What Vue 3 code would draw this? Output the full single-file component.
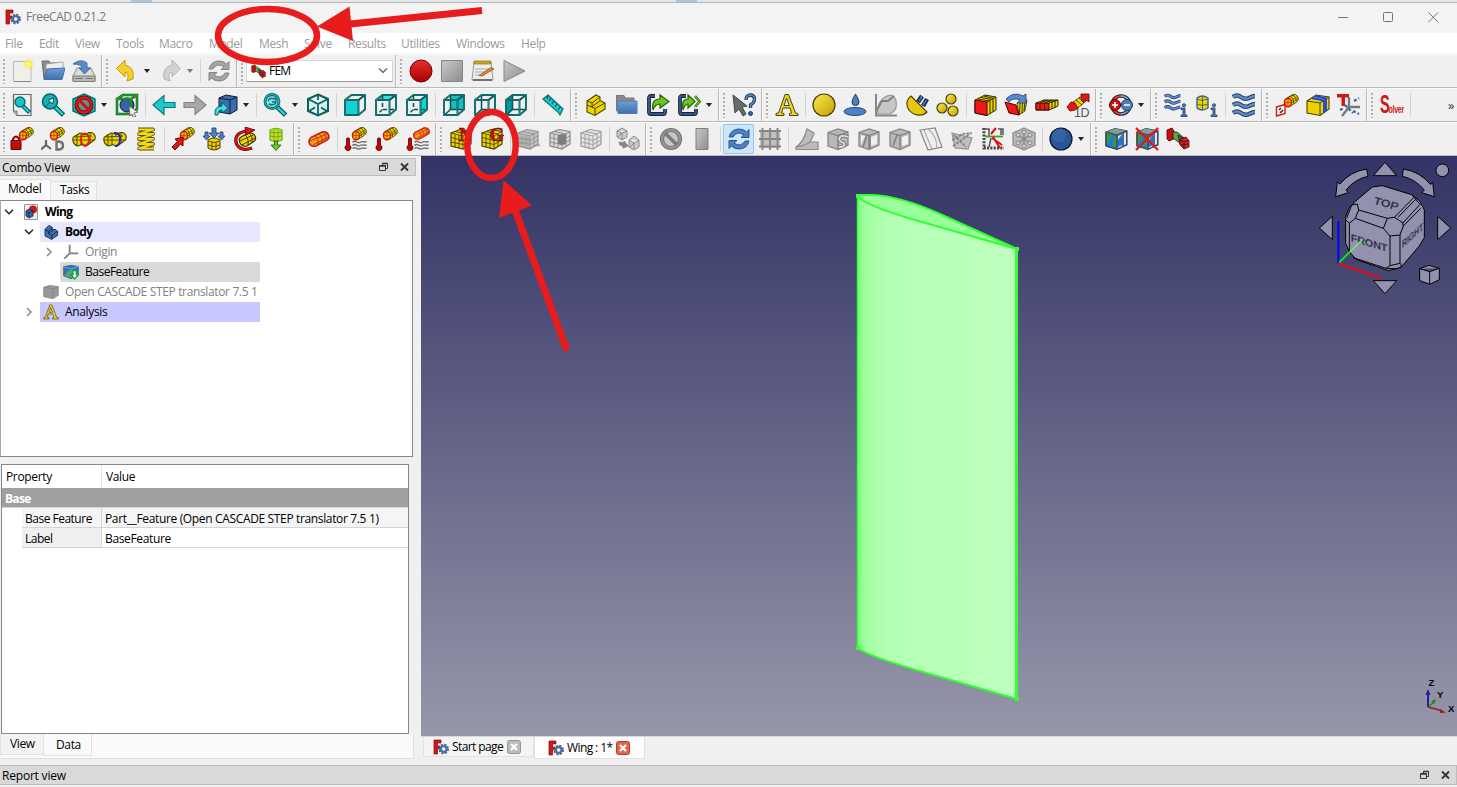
<script setup>
const menus = [
  ['File', 34], ['Edit', 36], ['View', 41], ['Tools', 43], ['Macro', 50], ['Model', 50],
  ['Mesh', 45], ['Solve', 44], ['Results', 53], ['Utilities', 55], ['Windows', 65], ['Help', 40],
]

// '|' is a separator, a trailing '+' or '~' adds an active or dimmed drop-down arrow
const parse = (s) => s.split(' ').map((t) => ({
  sep: t === '|',
  combo: t === 'combo',
  menu: t.endsWith('+') || t.endsWith('~'),
  dim: t.endsWith('~'),
  on: t === 'refresh',
  id: t.replace(/[+~]$/, ''),
}))
const rows = [
  ['new open save', 'undo+ redo~ | reload', 'combo', 'record stop macros play'],
  [
    'fitall fitsel drawstyle+ boxsel | back fwd linknav+ | zoomt+ iso | v-front v-top v-right | v-rear v-bottom v-left | ruler',
    'part folder link links+', 'whats',
    'analysis | solid fluid nonlin reinforced balls | beam shell beam3 fluid1d',
    'charge+', 'flowi cyli | flow', 'plane section axes', 'solver |',
  ],
  [
    'lock rigid contact tie spring | force pressure centrif gravity',
    'tinit | heatflux temp bodyheat', 'netgen gmsh | region group boundary | convert',
    'nope purge | refresh grid | warp sclip scut clip contour linec stress nodes | ball+',
    'pipe unpipe femwb',
  ],
].map((r) => r.map(parse))

const V = { A: '2,7', B: '15.5,7', C: '15.5,22', D: '2,22', a: '8.5,2', b: '22,2', c: '22,16.5', d: '8.5,16.5' }
const pts = (k) => k.split('').map((c) => V[c]).join(' ')
const views = [
  { n: 'front', f: 'ABCD', c: '#16d0d2' }, { n: 'top', f: 'ABba', c: '#34e0e2' }, { n: 'right', f: 'BCcb', c: '#16d0d2' },
  { n: 'rear', f: 'abcd', c: '#16c0c2' }, { n: 'bottom', f: 'DCcd', c: '#34e0e2' }, { n: 'left', f: 'ADda', c: '#06989a' },
]
const tree = [
  { t: 'Wing', x: 0, ex: 'open', ic: 't-doc', cls: 'bold', bg: '' },
  { t: 'Body', x: 20, ex: 'open', ic: 't-body', cls: 'bold', bg: 'lav' },
  { t: 'Origin', x: 40, ex: 'closed', ic: 't-origin', cls: 'off', bg: '' },
  { t: 'BaseFeature', x: 40, ex: '', ic: 't-base', cls: 'tight', bg: 'sel' },
  { t: 'Open CASCADE STEP translator 7.5 1', x: 20, ex: '', ic: 't-cube', cls: 'off', bg: '' },
  { t: 'Analysis', x: 20, ex: 'closed', ic: 'analysis', cls: '', bg: 'vio' },
]
</script>

<template>
  <div class="win">
    <svg class="defs" width="0" height="0">
      <defs>
        <linearGradient id="gy" x1="0" y1="0" x2="1" y2="1"><stop offset="0" stop-color="#fce94f" /><stop offset="1" stop-color="#c4a000" /></linearGradient>
        <linearGradient id="gb" x1="0" y1="0" x2="0" y2="1"><stop offset="0" stop-color="#729fcf" /><stop offset="1" stop-color="#3f70b0" /></linearGradient>
        <linearGradient id="gg" x1="0" y1="0" x2="1" y2="1"><stop offset="0" stop-color="#c8c8c8" /><stop offset="1" stop-color="#8e8e8e" /></linearGradient>
        <linearGradient id="gr" x1="0" y1="0" x2="0" y2="1"><stop offset="0" stop-color="#e83030" /><stop offset="1" stop-color="#a80000" /></linearGradient>

        <symbol id="bar" viewBox="0 0 24 24">
          <path d="M4 8 13 2.500Q18 .5 21 5T19 13L10 19Q5 20 3 15.500T4 8Z" fill="#edd400" stroke="#4a4200" stroke-width="1.200" />
          <path d="M10 5Q15 7 15 15M14 3Q19 5 19 12M7 6.500 17 2M12 14 21 8M13 10 20 5" fill="none" stroke="#4a4200" stroke-width="1.100" />
          <ellipse cx="7" cy="13.500" rx="5" ry="6" fill="#edb800" stroke="#d81010" stroke-width="2" />
          <path d="M3 13.500H11M7 8V19" stroke="#b03000" stroke-width="1" />
        </symbol>
        <symbol id="waves" viewBox="0 0 24 24" preserveAspectRatio="none">
          <g fill="none" stroke="#6f6f6f" stroke-width="3"><path d="M1 5Q4 1 7 4T13 5T19 4T23 3" /><path d="M1 12Q4 8 7 11T13 12T19 11T23 10" /><path d="M1 19Q4 15 7 18T13 19T19 18T23 17" /></g>
        </symbol>
        <symbol id="thermo" viewBox="0 0 8 14"><path d="M2.500 1.500Q4 0 5.500 1.500V8A3 3 0 1 1 2.500 8Z" fill="#cc0000" stroke="#500" stroke-width=".8" /></symbol>
        <symbol id="mcube" viewBox="0 0 24 24">
          <path d="M2 6 11 2.500 22 4.500V17L14 22 2 19Z" stroke-width="1.200" />
          <path d="M2 6 14 9V22M14 9 22 4.500M6 7.500V20M10 8.300V21M18 7V19.500M2 10.500 14 13.500 22 9M2 15 14 17.500 22 13M6 4.500 18 7" fill="none" stroke-width=".9" />
        </symbol>
        <symbol id="gcube" viewBox="0 0 24 24">
          <path d="M2 5.500 12 2 22 5V18L12 22.500 2 19Z" fill="#b8b8b8" stroke="#858585" stroke-width="1.300" />
          <path d="M2 5.500 12 8.500 22 5M12 8.500V22" fill="none" stroke="#808080" stroke-width="1.300" />
        </symbol>

        <symbol id="new" viewBox="0 0 24 24"><path d="M3.500 2.500H21V22.500H3.500Z" fill="#efefec" stroke="#b8b8b2" /><path d="M4 22.500H21" stroke="#888" /><circle cx="18.500" cy="5" r="5" fill="#f8ee40" opacity=".55" /><circle cx="18.500" cy="5" r="2.800" fill="#fdf75c" /></symbol>
        <symbol id="open" viewBox="0 0 24 24"><path d="M1 2H8L9 4H21V20H3Z" fill="#8b8f8c" stroke="#6a6d6a" /><path d="M5 5 22 3 22 12H5Z" fill="#eee" stroke="#999" stroke-width=".8" /><path d="M6 10 24 9 21 20.500H3Z" fill="url(#gb)" stroke="#3f70b0" /></symbol>
        <symbol id="save" viewBox="0 0 24 24"><path d="M5 9H19L23 17V22H1V17Z" fill="#dcdddA" stroke="#8a8c88" /><path d="M1 17H23V22.500H1Z" fill="#b8bab6" stroke="#7a7c78" /><path d="M3 19.500H11M14 19.500H21" stroke="#777" /><path d="M1 5Q9-1 15 4V9H18.500L12.500 15 7 9H10.500Q9 5 1 5Z" fill="#5c8ac4" stroke="#3465a4" stroke-width=".9" /></symbol>
        <symbol id="undo" viewBox="0 0 24 24"><path d="M10 1V6Q20 8 18 20L12 22Q15 14 10 13V18L1.500 9.500Z" fill="#f0d030" stroke="#c4a000" /></symbol>
        <symbol id="redo" viewBox="0 0 24 24"><path d="M14 1V6Q4 8 6 20L12 22Q9 14 14 13V18L22.500 9.500Z" fill="#d2d2d2" stroke="#b5b5b5" /></symbol>
        <symbol id="sync" viewBox="0 0 24 24"><path d="M2 10Q4 2 12 2 17 2 19.500 5L22 2.500V10.500H14L17 7.800Q10 3.500 6 10ZM22 14Q20 22 12 22 7 22 4.500 19L2 21.500V13.500H10L7 16.200Q14 20.500 18 14Z" stroke-width="1" /></symbol>
        <symbol id="reload" viewBox="0 0 24 24"><use href="#sync" fill="#a4a4a4" stroke="#858585" /></symbol>
        <symbol id="refresh" viewBox="0 0 24 24"><use href="#sync" fill="#4f80bd" stroke="#2a5595" /></symbol>
        <symbol id="record" viewBox="0 0 24 24"><circle cx="12" cy="12" r="11" fill="url(#gr)" stroke="#700" /></symbol>
        <symbol id="stop" viewBox="0 0 24 24"><path d="M1.500 1.500H22.500V22.500H1.500Z" fill="url(#gg)" stroke="#858585" /></symbol>
        <symbol id="macros" viewBox="0 0 24 24"><path d="M3 3H20L22 21H1Z" fill="#eeeeec" stroke="#999" /><path d="M3 2H20V5H3Z" fill="#c4a820" stroke="#8a7a20" stroke-width=".7" /><path d="M4 10H18M4 13H16M4 16H12" stroke="#aaa" /><path d="M2 21H21" stroke="#555" stroke-width="1.500" /><path d="M8 16.500 20 8.500 23 10 11 17Z" fill="#e08a30" stroke="#8a5518" stroke-width=".8" /></symbol>
        <symbol id="play" viewBox="0 0 24 24"><path d="M2 1.500 23 12 2 22.500Z" fill="url(#gg)" stroke="#858585" /></symbol>

        <symbol id="fitall" viewBox="0 0 24 24"><path d="M3.500 1.500H21V22.500H7L3.500 18Z" fill="#eee" stroke="#666" stroke-width="1.200" /><path d="M3.500 18H7V22.500" fill="#bbb" stroke="#777" /><path d="M13 13 19.500 19.500" stroke="#055" stroke-width="4" /><path d="M13 13 19 19" stroke="#16d0d2" stroke-width="2.200" /><circle cx="10" cy="9" r="5" fill="#16c4c6" stroke="#0a6e70" stroke-width="1.400" /></symbol>
        <symbol id="fitsel" viewBox="0 0 24 24"><path d="M13 13 22.500 22" stroke="#044" stroke-width="4.600" /><path d="M14 14 22 21.500" stroke="#16d0d2" stroke-width="2.600" /><circle cx="9" cy="8.500" r="7.500" fill="#18b0b2" stroke="#066" stroke-width="1.500" /><path d="M4.500 13.500 9.500 9 7.500 7 13 5 11.500 11 9.500 9" fill="#fff" stroke="#033" stroke-width=".8" /></symbol>
        <symbol id="drawstyle" viewBox="0 0 24 24"><path d="M12 1 23 6V18L12 23 1 18V6Z" fill="#16b8ba" stroke="#077072" stroke-width="1.400" /><circle cx="12" cy="12" r="7.500" fill="#6a8c8c" stroke="#600" stroke-width="3.800" /><circle cx="12" cy="12" r="7.500" fill="none" stroke="#e01818" stroke-width="2.300" /><path d="M7 7 17 17" stroke="#d01010" stroke-width="2.800" /></symbol>
        <symbol id="boxsel" viewBox="0 0 24 24"><circle cx="12" cy="12" r="7" fill="#3465a4" stroke="#0b1521" /><path d="M2 6H16V21H2ZM2 6 8 2H22V16L16 21M16 6 22 2" fill="none" stroke="#0a5a14" stroke-width="2.500" /><path d="M2 6H16V21H2ZM2 6 8 2H22V16L16 21M16 6 22 2" fill="none" stroke="#30c040" stroke-width="1" /><path d="M14 13 23 19 19 20 21 24 18 24 17 21 15 23Z" fill="#eee" stroke="#555" stroke-width=".8" /></symbol>
        <symbol id="back" viewBox="0 0 24 24"><path d="M1 12 12 2.500V9.500H23V14.500H12V21.500Z" fill="#20c8ca" stroke="#0a7a7c" stroke-width="1.200" /></symbol>
        <symbol id="fwd" viewBox="0 0 24 24"><path d="M23 12 12 2.500V9.500H1V14.500H12V21.500Z" fill="#a8a8a8" stroke="#858585" stroke-width="1.200" /></symbol>
        <symbol id="linknav" viewBox="0 0 24 24"><path d="M5 5 12 2 23 4V17L16 21 5 19Z" fill="#3a6cae" stroke="#0b1e38" stroke-width="1" /><path d="M5 5 16 7 23 4M16 7V21" fill="none" stroke="#0b1e38" /><path d="M1 22Q0 13 8 13V9.500L14 15 8 20V17Q4 17 4 22Z" fill="#34e0e2" stroke="#055" stroke-width=".9" /></symbol>
        <symbol id="zoomt" viewBox="0 0 24 24"><path d="M13 13 22.500 22" stroke="#044" stroke-width="4.600" /><path d="M14 14 22 21.500" stroke="#16d0d2" stroke-width="2.600" /><circle cx="9" cy="8.500" r="7" fill="#8fdcdd" stroke="#066" stroke-width="2.800" /><circle cx="9" cy="8.500" r="7" fill="none" stroke="#20b8ba" stroke-width="1.200" /><path d="M5 8Q7 4 11 6L13 5V9H9M13 10Q10 13 6 11" fill="none" stroke="#0a7678" stroke-width="1.400" /></symbol>
        <symbol id="iso" viewBox="0 0 24 24"><path d="M12 1.500 22 6V18L12 22.500 2 18V6Z" fill="#dcf2f2" stroke="#0a5f60" stroke-width="2" /><path d="M2 6 12 11 22 6M12 11V22M12 2V7M3 18 9 14.500M21 18 15 14.500" fill="none" stroke="#0a5f60" stroke-width="1.700" /></symbol>
        <symbol v-for="v in views" :key="v.n" :id="'v-' + v.n" viewBox="0 0 24 24">
          <polygon :points="pts(v.f)" :fill="v.c" />
          <g fill="none" stroke="#075354" stroke-width="1.900" stroke-linejoin="round">
            <polygon :points="pts('ABCD')" /><polyline :points="pts('AabB')" /><polyline :points="pts('bcC')" />
            <path v-if="v.n !== 'front'" d="M8.500 3V16.500H21M8.500 16.500 3 21.500" stroke-width="1.500" :stroke-dasharray="v.n === 'top' || v.n === 'right' ? '4 3' : 'none'" />
          </g>
          <g fill="none" stroke="#22a8aa" stroke-width=".6"><polygon :points="pts('ABCD')" /><polyline :points="pts('AabcC')" /></g>
        </symbol>
        <symbol id="ruler" viewBox="0 0 24 24"><path d="M2 6 7 2 22 16 19 22 18 20Z" fill="#20c8ca" stroke="#077072" stroke-width="1.200" /><path d="M7 2 6 6M10 5 8 8M13 8 11 11M16 11 14 14M19 14 17 17" stroke="#055" stroke-width="1.100" /></symbol>

        <symbol id="part" viewBox="0 0 24 24"><path d="M3 12V19L11 22.500 21 16V10L16 7.500V4L12 2 3 8Z" fill="#edd400" stroke="#4a4200" stroke-width="1.100" /><path d="M3 12 11 15.500V22M11 15.500 21 10M3 8 8 10V14M8 10 16 4M8 13.500 16 8" fill="none" stroke="#4a4200" stroke-width="1" /></symbol>
        <symbol id="folder" viewBox="0 0 24 24"><path d="M1.500 2.500H9L10 5H19V18H1.500Z" fill="#888b88" stroke="#777" /><path d="M3 8H22V20.500H3Z" fill="url(#gb)" stroke="#4f7cb8" /></symbol>
        <symbol id="lk" viewBox="0 0 24 24"><path d="M9 3H5Q3 3 3 5V19Q3 21 5 21H17Q19 21 19 19V16" fill="none" stroke="#16263c" stroke-width="3.800" /><path d="M9 3H5Q3 3 3 5V19Q3 21 5 21H17Q19 21 19 19V16" fill="none" stroke="#3f6496" stroke-width="1.600" /></symbol>
        <symbol id="link" viewBox="0 0 24 24"><use href="#lk" /><path d="M7 17Q5 6 14 6V2L23 8.500 14 15V11Q9 11 7 17Z" fill="#6cc81e" stroke="#2a5e0a" stroke-width="1.200" /></symbol>
        <symbol id="links" viewBox="0 0 24 24"><use href="#lk" /><path d="M6 17Q4 6 11 6V2L18 8.500 11 15V11Q8 11 6 17Z" fill="#6cc81e" stroke="#2a5e0a" stroke-width="1.200" /><path d="M18 3 22.500 8.500 18 14" fill="none" stroke="#2f6a0a" stroke-width="2.600" /><path d="M18 3 22.500 8.500 18 14" fill="none" stroke="#8ae234" stroke-width="1" /></symbol>
        <symbol id="whats" viewBox="0 0 24 24"><path d="M1 2 15 13 10 14 14 21 11 23 7 16 3 20Z" fill="#666b68" stroke="#444" stroke-width="1" /><path d="M14 7Q14 2 19 2 23 3 22.500 7 22 10 18.500 12V15" fill="none" stroke="#173a68" stroke-width="3.400" /><path d="M14 7Q14 2 19 2 23 3 22.500 7 22 10 18.500 12V15" fill="none" stroke="#5b87c0" stroke-width="1.500" /><circle cx="18.500" cy="20.500" r="2" fill="#3465a4" stroke="#173a68" /></symbol>

        <symbol id="analysis" viewBox="0 0 24 24"><path d="M1 22.500V20.500L3.500 20 10 1.500H13.500L20.500 20 23 20.500V22.500H14.500V20.500L16.500 20 15 15H8L6.500 20 9 20.500V22.500ZM9 12.500H14.300L11.500 5Z" fill="#edd426" stroke="#4a4414" stroke-width="1" /></symbol>
        <symbol id="solid" viewBox="0 0 24 24"><circle cx="12" cy="12" r="11" fill="url(#gy)" stroke="#4a4200" stroke-width="1.200" /></symbol>
        <symbol id="fluid" viewBox="0 0 24 24"><ellipse cx="12" cy="18.500" rx="11" ry="4" fill="#4f80c0" stroke="#204a87" /><path d="M12.500 1Q9 7 9 9A3.500 3.500 0 0 0 16 9Q16 7 12.500 1Z" fill="#4f80c0" stroke="#173a68" /></symbol>
        <symbol id="nonlin" viewBox="0 0 24 24"><path d="M2 1V22.500H23" stroke="#888" stroke-width="2" fill="none" /><path d="M4 21Q2 10 11 4 20-1 22 8 24 18 15 21Z" fill="#c6c6c6" stroke="#999" stroke-width="1.200" /><path d="M3 17 8 8H14L20 3" fill="none" stroke="#808080" stroke-width="1.800" /></symbol>
        <symbol id="reinforced" viewBox="0 0 24 24"><path d="M6 3 22 19Q17 24 9 21 1 17 2 9 3 5 6 3Z" fill="#e6c810" stroke="#4a4200" stroke-width="1.100" /><path d="M13 9 17 3M18 13 22 6" stroke="#122a50" stroke-width="4.500" /><path d="M14 8 17 3M18 12 21.500 7" stroke="#5580b0" stroke-width="1.500" /></symbol>
        <symbol id="balls" viewBox="0 0 24 24"><g fill="url(#gy)" stroke="#4a4200" stroke-width="1.200"><circle cx="15" cy="6" r="5" /><circle cx="6" cy="15" r="5" /><circle cx="17" cy="18" r="5" /></g></symbol>
        <symbol id="beam" viewBox="0 0 24 24"><path d="M2 7 12 2 23 4V17L14 22.500 2 20Z" fill="#edd400" stroke="#302b00" stroke-width="1" /><path d="M2 7 14 9V22.500L2 20Z" fill="#f01818" stroke="#400" stroke-width="1" /><path d="M14 9 23 4M17 7.500V20.500M20 6V18.500M5 6 16 8M8 4.500 19 6.500M11 3 21 5.500" fill="none" stroke="#302b00" stroke-width="1" /></symbol>
        <symbol id="shell" viewBox="0 0 24 24"><path d="M13 10 23 7 21 18 15 22Z" fill="#edd400" stroke="#302b00" stroke-width=".8" /><path d="M16 9 15.500 21M18.500 8.500 18 20M21 8 20 18" stroke="#302b00" stroke-width=".9" /><path d="M1 9 12 12 15 22 5 20Z" fill="#f01818" stroke="#400" stroke-width="1" /><path d="M2 6Q10-2 19 3L22 1V10H13L16 7Q9 4 5 9Z" fill="#5a8ac6" stroke="#204a87" stroke-width=".9" /></symbol>
        <symbol id="beam3" viewBox="0 0 24 24"><path d="M1 10 9 7H23V13L14 17H1Z" fill="#edd400" stroke="#302b00" stroke-width="1" /><path d="M1 10H14V17H1Z" fill="#f01818" stroke="#400" stroke-width="1" /><path d="M5 10V17M9.500 10V17M14 10 23 7M17 9V16M20 8V15M7 8H21M5 10 12 7M10 10 17 7" fill="none" stroke="#302b00" stroke-width="1" /></symbol>
        <symbol id="fluid1d" viewBox="0 0 24 24"><path d="M6 10 14 4 20 8 12 15Z" fill="#edd400" stroke="#302b00" stroke-width=".8" /><path d="M10 7 16 12M13 5 18 10" stroke="#302b00" stroke-width=".8" /><path d="M15 1H23V9L20 7 17 9 15 5ZM1 14 5 9 9 10 12 15 9 17 4 18Z" fill="#e01818" stroke="#600" stroke-width=".8" /><text x="8" y="23.500" font-family="Liberation Sans" font-size="12.500" fill="#555">1D</text></symbol>

        <symbol id="charge" viewBox="0 0 24 24"><circle cx="12" cy="12" r="9" fill="none" stroke="#301820" stroke-width="3.600" /><path d="M12 3A9 9 0 0 0 12 21" fill="none" stroke="#d84040" stroke-width="1.800" /><path d="M12 3A9 9 0 0 1 12 21" fill="none" stroke="#729fcf" stroke-width="1.800" /><circle cx="6" cy="12" r="5.500" fill="#d01010" stroke="#500" /><circle cx="18" cy="12" r="5.500" fill="#4f80bd" stroke="#173a68" /><path d="M3 12H9M6 9V15M15 12H21" stroke="#fff" stroke-width="1.600" /></symbol>
        <symbol id="flow" viewBox="0 0 24 24"><path d="M1 4Q5 1 9 4T17 5T23 3M1 12Q5 9 9 12T17 13T23 11M1 20Q5 17 9 20T17 21T23 19" fill="none" stroke="#1c3a68" stroke-width="4.400" /><path d="M1 4Q5 1 9 4T17 5T23 3M1 12Q5 9 9 12T17 13T23 11M1 20Q5 17 9 20T17 21T23 19" fill="none" stroke="#5f8cc4" stroke-width="2.500" /></symbol>
        <symbol id="ii" viewBox="0 0 8 14"><path d="M1 5H5V12H7V13.500H1V12H3V6.500H1Z" fill="#4f80bd" stroke="#1c3a68" stroke-width=".8" /><circle cx="4" cy="2.300" r="1.600" fill="#4f80bd" stroke="#1c3a68" stroke-width=".8" /></symbol>
        <symbol id="flowi" viewBox="0 0 24 24"><use href="#flow" x="0" y="0" width="17" height="18" /><use href="#ii" x="16" y="10" width="8" height="14" /></symbol>
        <symbol id="cyli" viewBox="0 0 24 24"><path d="M2 5V15Q7 19 13 15V5Q7 1 2 5Z" fill="#edd400" stroke="#3465a4" stroke-width="1.400" /><path d="M2 6Q7 9 13 6M2 11Q7 14 13 11M7.500 4V17" fill="none" stroke="#4a5a50" stroke-width=".9" /><use href="#ii" x="15" y="10" width="8" height="14" /></symbol>
        <symbol id="plane" viewBox="0 0 24 24"><use href="#bar" x="8" y="0" width="17" height="17" /><path d="M1.500 14 10 11.500V20.500L1.500 23Z" fill="#fff" stroke="#e01010" stroke-width="1.400" /><path d="M4 17 6 15M5 20 8 17" fill="none" stroke="#333" stroke-width="1.600" /></symbol>
        <symbol id="section" viewBox="0 0 24 24"><path d="M1 8 10 2 23 4V16L14 22.500 1 20Z" fill="#edd400" stroke="#4a4200" stroke-width="1.100" /><path d="M1 8 14 10V22M14 10 23 4" fill="none" stroke="#4a4200" stroke-width="1" /><path d="M6 5 18 7.500V19.500M9 3 20 5.500V18" fill="none" stroke="#1040f0" stroke-width="1.800" /></symbol>
        <symbol id="axes" viewBox="0 0 24 24"><path d="M12 14V4M12 14H23M12 14 5 23" stroke="#777" stroke-width="2.300" /><path d="M3 17 7 15M17 8 22 5M16 18 22 21M8 12 16 20" stroke="#3465a4" stroke-width="2.300" stroke-dasharray="3 2" /><path d="M0 1H12V4.500H8V13H4.500V4.500H0Z" fill="#d01818" /></symbol>
        <symbol id="solver" viewBox="0 0 24 24"><text x="0" y="20" font-family="Liberation Sans" font-weight="bold" font-size="25" fill="#d01818" textLength="9.500" lengthAdjust="spacingAndGlyphs">S</text><text x="8.500" y="20" font-family="Liberation Sans" font-weight="bold" font-size="10.500" fill="#d01818" textLength="15.500" lengthAdjust="spacingAndGlyphs">olver</text></symbol>

        <symbol id="lock" viewBox="0 0 24 24"><use href="#bar" x="8" y="-1" width="17" height="17" /><path d="M3 14V12Q6 7 9 12V14" fill="none" stroke="#800" stroke-width="2" /><path d="M1 13.500H11V22.500H1Z" fill="#d01010" stroke="#600" /><path d="M2 17H10M2 20H10" stroke="#900" stroke-width=".8" /></symbol>
        <symbol id="rigid" viewBox="0 0 24 24"><use href="#bar" x="8" y="-1" width="17" height="17" /><path d="M5 13V18L0 22.500M5 18 10 22" fill="none" stroke="#666" stroke-width="2.200" /><path d="M15.500 14.500H18Q22 15 22 18.500T18 22.500H15.500Z" fill="none" stroke="#707070" stroke-width="2.400" /></symbol>
        <symbol id="contact" viewBox="0 0 24 24"><path d="M3 9 8 6Q12 6 13 8L17 5.500Q22 5 23 9T21 14L15 18.500Q12 20 10 17.500L6 19Q2 18 1 14T3 9Z" fill="#edd400" stroke="#4a4200" stroke-width="1.100" /><path d="M5 8V19M9 7V18M18 6V16M1 13H23M3 10 20 9" stroke="#4a4200" stroke-width=".9" fill="none" /><ellipse cx="13" cy="12.500" rx="4" ry="6" fill="none" stroke="#e02010" stroke-width="1.800" /></symbol>
        <symbol id="tie" viewBox="0 0 24 24"><path d="M3 9 8 6Q12 6 13 8L17 5.500Q22 5 23 9T21 14L15 18.500Q12 20 10 17.500L6 19Q2 18 1 14T3 9Z" fill="#edd400" stroke="#4a4200" stroke-width="1.100" /><path d="M5 8V19M9 7V18M18 6V16M1 13H23M3 10 20 9" stroke="#4a4200" stroke-width=".9" fill="none" /><path d="M11 6Q17 5 17 12T12 19" fill="none" stroke="#2020c8" stroke-width="1.800" /></symbol>
        <symbol id="spring" viewBox="0 0 24 24"><path d="M4 2.500H19L5 7H19L5 12H19L5 17H19L5 21.500H20" fill="none" stroke="#5a5000" stroke-width="3.800" stroke-linejoin="round" /><path d="M4 2.500H19L5 7H19L5 12H19L5 17H19L5 21.500H20" fill="none" stroke="#f0d820" stroke-width="2.200" stroke-linejoin="round" /></symbol>
        <symbol id="force" viewBox="0 0 24 24"><use href="#bar" x="8" y="-1" width="17" height="17" /><path d="M12 10V19L9.500 17 4 23 1 20 6.500 14.500 4 12Z" fill="#e01818" stroke="#600" stroke-width="1" /></symbol>
        <symbol id="pressure" viewBox="0 0 24 24"><path d="M10 1H14V6H17L12 11 7 6H10ZM3 5H6V9H8L4.500 13 1 9H3ZM18 5H21V9H23L19.500 13 16 9H18Z" fill="#4f80bd" stroke="#1c3a68" stroke-width=".8" /><path d="M6 13Q12 9 18 13V21Q12 25 6 21Z" fill="#edd400" stroke="#4a4200" /><path d="M6 14Q12 17 18 14M6 18Q12 21 18 18M10 15V23M14 15V23" fill="none" stroke="#4a4200" stroke-width=".9" /></symbol>
        <symbol id="centrif" viewBox="0 0 24 24"><path d="M8 10 15 6Q20 5 22 9T20 15L14 19Q9 20 7 16T8 10Z" fill="#edd400" stroke="#302b00" stroke-width="1.100" /><path d="M12 8Q16 11 15 18M16 6Q20 9 19 15M7 14 20 8M9 18 22 11" fill="none" stroke="#302b00" stroke-width=".9" /><path d="M19 21Q8 25 3.500 17 0 6 14 4" fill="none" stroke="#400" stroke-width="3.200" /><path d="M19 21Q8 25 3.500 17 0 6 14 4" fill="none" stroke="#e01010" stroke-width="2" /><path d="M12 0 22 3 13 8Z" fill="#e01010" stroke="#500" stroke-width=".8" /></symbol>
        <symbol id="gravity" viewBox="0 0 24 24"><path d="M6 3Q12 0 18 3V13Q12 16 6 13Z" fill="#c8e020" stroke="#6cb818" stroke-width="1.300" /><path d="M6 5Q12 7 18 5M6 9Q12 11 18 9M10 3V14M14 3V14" fill="none" stroke="#6aa018" stroke-width=".9" /><path d="M10.500 14H13.500V18H17L12 23.500 7 18H10.500Z" fill="#6cc81e" stroke="#2a5e0a" stroke-width=".9" /></symbol>
        <symbol id="tinit" viewBox="0 0 24 24"><path d="M4 10.500 15 5Q20 4 21.500 8T19 13.500L9 19Q4 20 2.500 16.500T4 10.500Z" fill="#f0a020" stroke="#d01818" stroke-width="1.600" /><path d="M8 9Q12 11 11 18M12 7Q16 9 15 15.500M16 5Q20 8 19 13M3 14 20 7M6 18 21 10" stroke="#c82010" stroke-width=".9" fill="none" /></symbol>
        <symbol id="heatflux" viewBox="0 0 24 24"><use href="#bar" x="7" y="-1" width="17" height="17" /><use href="#waves" x="8" y="13" width="15" height="11" /><use href="#thermo" x="0" y="10" width="8" height="14" /></symbol>
        <symbol id="temp" viewBox="0 0 24 24"><use href="#bar" x="7" y="-1" width="17" height="17" /><use href="#thermo" x="0" y="10" width="8" height="14" /></symbol>
        <symbol id="bodyheat" viewBox="0 0 24 24"><use href="#tinit" x="6" y="-3" width="19" height="19" /><use href="#waves" x="8" y="13" width="15" height="11" /><use href="#thermo" x="0" y="10" width="8" height="14" /></symbol>
        <symbol id="netgen" viewBox="0 0 24 24"><use href="#mcube" fill="#edd400" stroke="#4a4200" /><text x="10" y="14" font-family="Liberation Serif" font-weight="bold" font-size="19" fill="#d01010" stroke="#600" stroke-width=".5">N</text></symbol>
        <symbol id="gmsh" viewBox="0 0 24 24"><use href="#mcube" fill="#edd400" stroke="#4a4200" /><text x="9.500" y="14" font-family="Liberation Serif" font-weight="bold" font-size="19" fill="#d01010" stroke="#600" stroke-width=".5">G</text></symbol>
        <symbol id="region" viewBox="0 0 24 24"><path d="M12 20 24 19 20 15Z" fill="#aaa" /><use href="#mcube" fill="#c4c4c4" stroke="#909090" x="-1" /><path d="M3 8V19M7 9V20M11 9V21M1 12H13M1 16H13" stroke="#999" stroke-width=".8" /></symbol>
        <symbol id="group" viewBox="0 0 24 24"><use href="#mcube" fill="#d8d8d8" stroke="#888" /><path d="M10 8 14 7 18 8V17L14 18 10 17Z" fill="#7d7d7d" /></symbol>
        <symbol id="boundary" viewBox="0 0 24 24"><use href="#mcube" fill="#e6e6e6" stroke="#999" /></symbol>
        <symbol id="convert" viewBox="0 0 24 24"><g fill="#ccc" stroke="#808080" stroke-width=".9"><path d="M1 4 6 1 11 4V10L6 13 1 10ZM1 4 6 6 11 4M6 6 2 10M6 6V13M13 13 18 9 23 13V20L18 23 13 20ZM13 13 18 16 23 13M18 16 14 20M18 16V22" /><path d="M3 15 8 16V14L12 19 7 21V19L4 18Z" fill="#888" /></g></symbol>
        <symbol id="nope" viewBox="0 0 24 24"><circle cx="12" cy="12" r="9" fill="#c8c8c8" stroke="#6f6f6f" stroke-width="4.200" /><circle cx="12" cy="12" r="9" fill="none" stroke="#959595" stroke-width="2.400" /><path d="M6 6 18 18" stroke="#7a7a7a" stroke-width="3.300" /></symbol>
        <symbol id="purge" viewBox="0 0 24 24"><path d="M6 1.500H18V22.500H6Z" fill="url(#gg)" stroke="#808080" /></symbol>
        <symbol id="grid" viewBox="0 0 24 24"><path d="M2 3H22V21H2Z" fill="#c0c0c0" /><path d="M4.500 1V23M12 1V23M19.500 1V23M1 4H23M1 12H23M1 19.500H23" stroke="#868686" stroke-width="1.900" /></symbol>
        <symbol id="warp" viewBox="0 0 24 24"><path d="M1 20Q8 16 12 2L19 6Q17 12 15 15H23V22.500H1Z" fill="#bcbcbc" stroke="#8a8a8a" stroke-width="1.200" /><path d="M1 20Q10 19 15 15" fill="none" stroke="#8a8a8a" stroke-width="1.200" /></symbol>
        <symbol id="sclip" viewBox="0 0 24 24"><use href="#gcube" /><path d="M22 10Q14 7 13 12 14 15 18 16 20 20 13 20" fill="none" stroke="#777" stroke-width="3.600" /><path d="M22 10Q14 7 13 12 14 15 18 16 20 20 13 20" fill="none" stroke="#ddd" stroke-width="1.800" /></symbol>
        <symbol id="scut" viewBox="0 0 24 24"><use href="#gcube" /><path d="M4 8 8 9 4 18ZM14 10 20 8V17L14 19Z" fill="#eee" /><path d="M10 8 6 20M13 9V21" stroke="#7d7d7d" stroke-width="1.400" /></symbol>
        <symbol id="clip" viewBox="0 0 24 24"><use href="#gcube" /><path d="M14 10 20 8V17L14 19Z" fill="#f4f4f4" /><path d="M9 8 5 19" stroke="#808080" stroke-width="1.500" /></symbol>
        <symbol id="contour" viewBox="0 0 24 24"><path d="M1 3 16 1 23 20 9 23Z" fill="#eee" stroke="#888" stroke-width="1.200" /><path d="M5 3Q9 13 13 22M9 2Q18 9 18 21" fill="none" stroke="#aaa" stroke-width="1.100" /></symbol>
        <symbol id="linec" viewBox="0 0 24 24"><path d="M2 6 22 11 18 22 5 21Z" fill="#c0c0c0" stroke="#909090" stroke-width="1.200" /><path d="M3 19 20 7M4 8 16 20M2 13 8 10 12 7 22 6" stroke="#808080" stroke-width="1.700" fill="none" stroke-dasharray="3 1" /></symbol>
        <symbol id="stress" viewBox="0 0 24 24"><path d="M3 1V21H23" fill="none" stroke="#444" stroke-width="3" stroke-dasharray="2 1.300" /><path d="M1 2H8V9M17 2H22V8M20 2V8M8 20 10 11" fill="none" stroke="#555" stroke-width="1.500" /><path d="M4 9.500H22" stroke="#40a020" stroke-width="1.800" /><path d="M15 1 10 7M12 10 19 21M11 11 21 18" stroke="#e01010" stroke-width="2" fill="none" /></symbol>
        <symbol id="nodes" viewBox="0 0 24 24"><path d="M12 1 23 6V18L12 23 1 18V6Z" fill="#b8b8b8" stroke="#909090" stroke-width="1.300" /><path d="M6 8 18 16M6 16 18 8M12 5V19" stroke="#888" stroke-width="1.400" /><g fill="#d4d4d4" stroke="#858585"><circle cx="6" cy="8" r="2" /><circle cx="18" cy="8" r="2" /><circle cx="6" cy="16" r="2" /><circle cx="18" cy="16" r="2" /><circle cx="12" cy="5" r="2" /><circle cx="12" cy="19" r="2" /></g></symbol>
        <symbol id="ball" viewBox="0 0 24 24"><circle cx="12" cy="12" r="11" fill="#285596" stroke="#0b1521" stroke-width="1.200" /><circle cx="10" cy="8.500" r="7" fill="#4a76b4" opacity=".4" /></symbol>
        <symbol id="pipe" viewBox="0 0 24 24"><path d="M2 5 11 1.500 23 4V18L13 22.500 2 19Z" fill="#1878e8" stroke="#334" stroke-width="1.100" /><path d="M2 5 11 1.500 23 4 13 8Z" fill="#7fa09a" /><path d="M3 7 8 8 3 18ZM10 9 12 9V20L8 19Z" fill="#3a9a30" /><path d="M14 9 22 5V17L14 21Z" fill="#dfe8f0" /><path d="M14 13 18 7V18L14 20Z" fill="#1878e8" /><path d="M2 5 13 8 23 4M13 8V22M19 6V20M2 5V19" fill="none" stroke="#4c5458" stroke-width="1.700" /></symbol>
        <symbol id="unpipe" viewBox="0 0 24 24"><use href="#pipe" /><path d="M1 1 23 23M23 1 1 23" stroke="#f01010" stroke-width="2.200" /></symbol>
        <symbol id="femwb" viewBox="0 0 24 24"><path d="M1 3 6 1 8 4V12L3 14 1 12Z" fill="#c01010" stroke="#500" stroke-width=".8" /><path d="M7 5 11 5 18 11 15 17 7 11Z" fill="#60a838" stroke="#222" stroke-width=".8" /><path d="M12 8 19 12 14 17Z" fill="#3465a4" stroke="#222" stroke-width=".8" /><path d="M14 12 20 10 23 14V20L18 22 14 18Z" fill="#d02028" stroke="#500" stroke-width=".8" /><path d="M14 13 18 15V22M18 15 23 13M15 18 22 17" fill="none" stroke="#500" stroke-width=".8" /></symbol>

        <symbol id="t-doc" viewBox="0 0 16 16"><path d="M1.500 .5H14.500V15.500H1.500Z" fill="#eee" stroke="#999" /><circle cx="10" cy="5.500" r="4" fill="#d01818" /><path d="M3 7 6 5 10 7V12L6 14 3 12Z" fill="#3465a4" stroke="#0b1e38" stroke-width=".8" /><path d="M3 7 6 9 10 7M6 9V14" stroke="#0b1e38" stroke-width=".6" fill="none" /></symbol>
        <symbol id="t-body" viewBox="0 0 24 24"><path d="M3 8 9 2 14 5V9L18 8 22 11V17L13 23 3 18Z" fill="#3d70b0" stroke="#0b1e38" stroke-width="1.200" /><path d="M3 8 8 11V14L13 17V23M8 11 14 6M8 14 15 9M13 17 22 11" fill="none" stroke="#0b1e38" stroke-width="1.200" /></symbol>
        <symbol id="t-origin" viewBox="0 0 24 24"><path d="M10 1V14H23M10 14 2 22" stroke="#808080" stroke-width="2.600" fill="none" /></symbol>
        <symbol id="t-base" viewBox="0 0 24 24"><path d="M1 4 12 2 23 4V17L12 22 1 18Z" fill="#2f74b8" stroke="#1b5a90" /><path d="M1 5 12 7 23 4" fill="none" stroke="#5fa8d8" stroke-width="1.500" /><path d="M2 18Q6 9 14 8L22 14 12 21Z" fill="#5aa070" /><path d="M15 10H20V16H23L17.500 22.500 12 16H15Z" fill="#fff" stroke="#0aa82c" stroke-width="2" /></symbol>
        <symbol id="t-cube" viewBox="0 0 24 24"><path d="M1 5 10 2 23 4V17L15 22 1 19Z" fill="#999" stroke="#808080" stroke-width="1" /><path d="M1 5 15 7 23 4M15 7V22" fill="none" stroke="#7a7a7a" /></symbol>
        <symbol id="fc" viewBox="0 0 16 16"><path d="M1 1H8V4H4.500V7H7V10H4.500V15H1Z" fill="#d01818" stroke="#8a0808" stroke-width=".7" /><circle cx="10.700" cy="10" r="4.300" fill="none" stroke="#3f6090" stroke-width="2" stroke-dasharray="2 1.380" /><circle cx="10.700" cy="10" r="2.900" fill="#fff" stroke="#4a70a8" stroke-width="2.400" /></symbol>
      </defs>
    </svg>

    <div class="strip"><i></i><i></i></div>
    <header class="title">
      <svg class="fcicon"><use href="#fc" /></svg><span>FreeCAD 0.21.2</span>
      <svg class="wbtn" viewBox="0 0 110 12" fill="none" stroke="#777"><path d="M9 6.500H19M99.500 1.500 109 11M109 1.500 99.500 11" /><rect x="54.500" y="1.500" width="9" height="9" rx="1" /></svg>
    </header>
    <nav class="menubar"><span v-for="m in menus" :key="m[0]" :style="{ width: m[1] + 'px' }">{{ m[0] }}</span></nav>

    <div v-for="(r, i) in rows" :key="i" class="trow">
      <div v-for="(g, j) in r" :key="j" :class="['tgroup', { open: j === r.length - 1 }]">
        <b class="grip"></b>
        <template v-for="(t, k) in g" :key="k">
          <b v-if="t.sep" class="sep"></b>
          <div v-else-if="t.combo" class="combo">
            <svg class="ci"><use href="#femwb" /></svg><span>FEM</span>
            <svg class="chev" viewBox="0 0 10 6"><path d="M1 .5 5 4.500 9 .5" fill="none" stroke="#555" stroke-width="1.100" /></svg>
          </div>
          <span v-else :class="['btn', { on: t.on, drop: t.menu, dim: t.dim }]"><svg class="ico"><use :href="'#' + t.id" /></svg></span>
        </template>
      </div>
      <span v-if="i === 1" class="more">»</span>
    </div>

    <main class="main">
      <aside class="dock">
        <div class="dtitle"><span class="sx">Combo View</span>
          <svg viewBox="0 0 32 10" class="dbtn"><path d="M3.500 3V1.500H8.500V6.500H7M.5 3.500H6.500V8.500H.5Z" fill="none" stroke="#333" /><path d="M.5 4H6.500M3.500 1.500H8.500" stroke="#333" stroke-width="1.500" /><path d="M22 1.500 29 8.500M29 1.500 22 8.500" stroke="#333" stroke-width="1.800" /></svg>
        </div>
        <div class="tabs"><span class="act">Model</span><span class="tk">Tasks</span></div>
        <div class="tree">
          <div v-for="n in tree" :key="n.t" class="node">
            <span class="exp" :style="{ marginLeft: n.x + 'px' }">
              <svg v-if="n.ex === 'open'" viewBox="0 0 10 6" width="10" height="6"><path d="M1 .7 5 4.700 9 .7" fill="none" stroke="#222" stroke-width="1.500" /></svg>
              <svg v-if="n.ex === 'closed'" viewBox="0 0 6 10" width="6" height="10"><path d="M1 1 5 5 1 9" fill="none" stroke="#888" stroke-width="1.500" /></svg>
            </span>
            <span :class="['cell', n.bg]"><svg class="ti"><use :href="'#' + n.ic" /></svg><span :class="n.cls">{{ n.t }}</span></span>
          </div>
        </div>
        <div class="props">
          <div class="ph"><span>Property</span><span>Value</span></div>
          <div class="pg">Base</div>
          <div class="pr alt"><span>Base Feature</span><span>Part__Feature (Open CASCADE STEP translator 7.5 1)</span></div>
          <div class="pr"><span>Label</span><span>BaseFeature</span></div>
        </div>
        <div class="btabs"><span class="v">View</span><span class="d">Data</span></div>
      </aside>

      <section class="mdi">
        <svg class="view" width="1036" height="580" viewBox="421 156 1036 580">
          <defs>
            <linearGradient id="bg" x1="0" y1="0" x2="0" y2="1"><stop offset="0" stop-color="#333366" /><stop offset="1" stop-color="#9797aa" /></linearGradient>
            <linearGradient id="wing" x1="0" y1="0" x2="1" y2="0"><stop offset="0" stop-color="#7dff7d" /><stop offset=".05" stop-color="#a2ffa2" /><stop offset=".2" stop-color="#b5ffb5" /><stop offset="1" stop-color="#bdffbd" /></linearGradient>
          </defs>
          <rect x="421" y="156" width="1036" height="580" fill="url(#bg)" />
          <path d="M858 196Q861 204 915 220L1017 249V699L920 671Q868 656 858 648Z" fill="url(#wing)" />
          <path d="M858 195H872Q900 196 940 214L1017 249 915 220Q864 205 858 196Z" fill="#99ff99" />
          <path d="M858 195H872Q900 196 940 214L1017 249 915 220Q864 205 858 196M858 648Q868 656 920 671L1017 699" fill="none" stroke="#33ff33" stroke-width="2" />
          <path d="M857.500 196V648" stroke="#33ff33" stroke-width="1.500" />
          <path d="M1016.500 249V699" stroke="#33ff33" stroke-width="3" />
          <path d="M856 194H860V198H856ZM1015 247H1019V251H1015ZM856 646H860V650H856ZM1015 697H1019V701H1015Z" fill="#33ff33" />

          <g transform="translate(1300 155) scale(.33333)" stroke="#000" stroke-width="3" fill="#9292ae" stroke-linejoin="round">
            <path d="M255 22 290 62H220ZM255 416 220 377H290ZM58 219 97 184V254ZM452 219 413 184V254Z" />
            <path d="M200 42Q150 50 120 87L112 81 107 125 145 113 138 105Q165 72 204 64ZM310 42Q360 50 392 89L398 81 403 125 365 113 373 105Q345 72 307 64Z" />
            <circle cx="427" cy="46" r="19" />
            <path d="M359 341 387 331 418 340V374L390 388 359 377ZM359 341 389 350 418 340M389 350V388" />
            <path d="M217 96 247 92 335 119 359 138 373 165V248L357 274 303 337 265 347 168 313 148 290 137 265V185L147 160 165 140Z" />
            <path d="M172 147 176 165 262 190 283 187 342 127M176 165 166 190 250 220 262 190M140 190 155 150 172 147M166 190 148 205 138 195M250 220 270 243 300 240 310 213 308 203 283 187M308 205 360 148M335 119 342 127 360 148M294 187 347 133M310 213 362 160M270 243V332L258 340M300 240V325L270 332M303 325V337M148 205V290M258 340 290 342M160 308 258 340" fill="none" />
            <g stroke="none" fill="#33334a" font-family="Liberation Sans" font-weight="bold">
              <text transform="matrix(1 .28 -.3 .95 219 146)" font-size="32" textLength="72" lengthAdjust="spacingAndGlyphs">TOP</text>
              <text transform="matrix(1 .3 0 1 152 258)" font-size="31" textLength="110" lengthAdjust="spacingAndGlyphs">FRONT</text>
              <text transform="matrix(.76 -.68 0 1 306 280)" font-size="31" textLength="83" lengthAdjust="spacingAndGlyphs">RIGHT</text>
            </g>
            <path d="M115 324V198" stroke="#0000ff" stroke-width="6" /><path d="M118 322 150 290" stroke="#00ff00" stroke-width="5" /><path d="M150 290 188 253" stroke="#66ee77" stroke-width="5" /><path d="M115 326 245 370" stroke="#ff0000" stroke-width="6" />
          </g>
          <g fill="none" stroke-width="1.500">
            <path d="M1428 707V693" stroke="#22229a" stroke-width="2" /><path d="M1425.500 695 1428 689 1430.500 695Z" fill="#22229a" /><path d="M1428 707 1434 702" stroke="#1a8a1a" /><path d="M1431.500 701 1436 699 1434.500 704Z" fill="#1a8a1a" /><path d="M1428 707 1441 710.500" stroke="#9a1a1a" /><path d="M1440 709 1446 712.500 1440 713Z" fill="#9a1a1a" />
          </g>
          <g class="ax"><text x="1428.500" y="686">Z</text><text x="1437" y="698">Y</text><text x="1448" y="712">X</text></g>
        </svg>
        <div class="wtabs">
          <span class="wt"><svg class="fcicon"><use href="#fc" /></svg><em>Start page</em><svg class="cl" viewBox="0 0 14 14"><rect x=".5" y=".5" width="13" height="13" rx="2" fill="#b8bcba" stroke="#909492" /><path d="M4 4 10 10M10 4 4 10" stroke="#fff" stroke-width="2.200" /></svg></span>
          <span class="wt cur"><svg class="fcicon"><use href="#fc" /></svg><em>Wing : 1*</em><svg class="cl" viewBox="0 0 14 14"><rect x=".5" y=".5" width="13" height="13" rx="2" fill="#e0684a" stroke="#c03a20" /><path d="M4 4 10 10M10 4 4 10" stroke="#fff" stroke-width="2.200" /></svg></span>
        </div>
      </section>
    </main>

    <footer class="dtitle report"><span class="sx">Report view</span>
      <svg viewBox="0 0 32 10" class="dbtn"><path d="M3.500 3V1.500H8.500V6.500H7M.5 3.500H6.500V8.500H.5Z" fill="none" stroke="#333" /><path d="M.5 4H6.500M3.500 1.500H8.500" stroke="#333" stroke-width="1.500" /><path d="M22 1.500 29 8.500M29 1.500 22 8.500" stroke="#333" stroke-width="1.800" /></svg>
    </footer>

    <svg class="marks" width="1457" height="787" fill="none" stroke="#e81c1c">
      <ellipse cx="267.500" cy="35.500" rx="49.500" ry="26.500" stroke-width="6.500" />
      <ellipse cx="491.500" cy="145" rx="24.200" ry="33" stroke-width="6.500" />
      <path d="M350 24 482 10.500M515 210 567 350.500" stroke-width="7" />
      <path d="M317 26.500 349.500 6.500 353 41ZM503.500 180 499 218 532 205.500Z" fill="#e81c1c" stroke="none" />
    </svg>
  </div>
</template>

<style>
html, body { margin: 0; overflow: hidden; }
</style>

<style scoped>
.win { width: 1457px; height: 787px; background: #f0f0f0; position: relative; overflow: hidden; display: flex; flex-direction: column; font: 12px/16px "Open Sans", "Noto Sans", sans-serif; letter-spacing: -0.35px; color: #000; white-space: nowrap; }
.defs { position: absolute; }
.strip { height: 3px; flex: none; background: #e6e6e6; border-bottom: 1px solid #b4b6ba; box-sizing: border-box; display: flex; gap: 524px; padding-left: 131px; }
.strip i { width: 21px; height: 2px; background: #a9c8e0; }
.title { height: 30px; flex: none; background: #f3f3f3; display: flex; align-items: center; padding: 0 0 2px 5px; box-sizing: border-box; color: #777; }
.title span { margin-left: 5px; letter-spacing: -0.4px; }
.fcicon { width: 16px; height: 16px; flex: none; }
.wbtn { width: 110px; height: 12px; margin-left: auto; margin-right: 18px; }
.menubar { height: 21px; flex: none; background: #fff; display: flex; align-items: center; padding: 1px 0 0 5px; box-sizing: border-box; color: #9a9a9a; border-bottom: 1px solid #f4f4f4; }
.menubar span { flex: none; }
.trow { height: 34px; flex: none; box-sizing: border-box; display: flex; border-bottom: 1px solid #b9b9b9; border-top: 1px solid #fafafa; margin-left: -4px; }
.tgroup { display: flex; align-items: center; padding-right: 2px; border-right: 1px solid #b9b9b9; box-shadow: 1px 0 #fafafa; }
.tgroup.open { border-right: 0; box-shadow: none; }
.grip { width: 10px; height: 26px; flex: none; background: radial-gradient(circle, #b0b0b0 1px, transparent 1.300px) 3px 0 / 4px 4px repeat-y; }
.tgroup:first-child .grip { background-position-x: 6px; }
.tgroup:not(:first-child) .grip { width: 9px; }
.sep { width: 6px; height: 24px; background: linear-gradient(#d2d2d2, #d2d2d2) 3px 0 / 1px 100% no-repeat; }
.btn { width: 31px; height: 30px; box-sizing: border-box; display: flex; align-items: center; padding-left: 3.500px; flex: none; }
.btn.on { background: #cde6f9; border: 1px solid #92c8f0; border-radius: 2px; padding-left: 2.500px; }
.btn.drop { width: 43px; }
.btn.drop::after { content: ""; border: 3.500px solid transparent; border-top: 4px solid #222; border-bottom: 0; margin-left: 5px; }
.btn.dim::after { border-top-color: #777; }
.ico { width: 24px; height: 24px; flex: none; overflow: visible; }
.combo { width: 147px; height: 22px; box-sizing: border-box; border: 1px solid #d4d4d4; border-bottom-color: #9a9a9a; background: #fff; display: flex; align-items: center; padding: 0 4px; letter-spacing: -0.8px; }
.combo .ci { width: 15px; height: 15px; margin-right: 3px; }
.chev { width: 10px; height: 6px; margin-left: auto; }
.more { margin: 8px 3px 0 auto; font-size: 13px; color: #333; }
.main { flex: none; height: 609px; display: flex; }
.dock { width: 421px; display: flex; flex-direction: column; }
.dtitle { width: 416px; height: 18px; margin-top: 2px; box-sizing: border-box; background: #d9d9d9; border: 1px solid #bdbdbd; border-left: 0; display: flex; align-items: center; justify-content: space-between; padding: 1px 4px 0 2px; flex: none; }
.dbtn { width: 32px; height: 10px; margin-bottom: 1px; }
.sx { letter-spacing: -0.2px; }
.tabs { display: flex; height: 24px; align-items: flex-end; flex: none; }
.tabs span { box-sizing: border-box; border: 1px solid #e2e2e2; border-bottom: 0; border-left: 0; }
.tabs .act { width: 51px; height: 21px; background: #fafafa; padding: 1px 0 0 8px; }
.tabs .tk { width: 46px; height: 19px; background: #f5f5f5; padding: 0 0 0 9px; }
.tree { width: 413px; height: 257px; box-sizing: border-box; border: 1px solid #828790; border-left-color: #aaa; background: #fff; flex: none; padding-top: 1px; }
.node { height: 20px; display: flex; align-items: center; }
.exp { width: 19px; flex: none; display: flex; justify-content: center; align-items: center; height: 20px; padding-right: 3px; box-sizing: border-box; }
.cell { height: 20px; display: flex; align-items: center; gap: 6px; padding-left: 3px; box-sizing: border-box; }
.cell.lav { background: #e6e6ff; width: 220px; }
.cell.vio { background: #c8c8ff; width: 220px; }
.cell.sel { background: #d9d9d9; width: 200px; border-radius: 2px; }
.ti { width: 16px; height: 16px; flex: none; }
.bold { font-weight: 700; letter-spacing: -0.6px; }
.tight { letter-spacing: -0.5px; }
.off { color: #808080; }
.props { width: 408px; height: 270px; margin: 7px 0 0 1px; box-sizing: border-box; border: 1px solid #828790; background: #fff; flex: none; }
.ph { display: flex; height: 23px; line-height: 24px; }
.ph span:first-child { width: 100px; height: 23px; padding-left: 4px; box-sizing: border-box; border-right: 1px solid #e4e4e4; }
.ph span:last-child { padding-left: 4px; }
.pg { height: 20px; line-height: 21px; box-sizing: border-box; background: #a0a0a0; color: #fff; font-weight: 700; padding-left: 3px; border-bottom: 1px solid #d4d4d4; letter-spacing: -0.7px; }
.pr { height: 20px; line-height: 21px; display: flex; margin-left: 20px; box-sizing: border-box; border-bottom: 1px solid #d4d4d4; }
.pr span:first-child { width: 80px; box-sizing: border-box; padding-left: 3px; border-right: 1px solid #d4d4d4; background: #f0f0f0; letter-spacing: -0.5px; }
.pr span:last-child { padding-left: 3px; flex: 1; }
.pr.alt span { background: #f5f5f5; }
.btabs { display: flex; height: 24px; width: 413px; background: #fafafa; border-right: 1px solid #e0e0e0; border-bottom: 1px solid #e0e0e0; }
.btabs span { box-sizing: border-box; border: 1px solid #e2e2e2; border-top: 0; }
.btabs .v { height: 21px; width: 44px; padding: 2px 0 0 9px; background: #f3f3f3; }
.btabs .d { height: 22px; width: 49px; padding: 3px 0 0 12px; margin-left: -1px; }
.mdi { display: flex; flex-direction: column; width: 1036px; }
.view { display: block; }
.ax { font: bold 9.500px "Liberation Sans", sans-serif; letter-spacing: 0; }
.wtabs { display: flex; align-items: flex-start; border-top: 1px solid #d8d8d8; padding-left: 2px; }
.wt { display: flex; align-items: center; height: 20px; width: 111px; padding-left: 9px; box-sizing: border-box; background: #f4f4f4; border: 1px solid #e2e2e2; border-top: 0; }
.wt.cur { height: 22px; padding-left: 13px; background: #fdfdfd; }
.wt em { font-style: normal; margin: 1px 4px 0 3px; letter-spacing: -0.6px; }
.cl { width: 14px; height: 14px; }
.report { width: 1457px; height: 20px; margin-top: 0; padding-right: 4px; }
.marks { position: absolute; left: 0; top: 0; }
</style>
